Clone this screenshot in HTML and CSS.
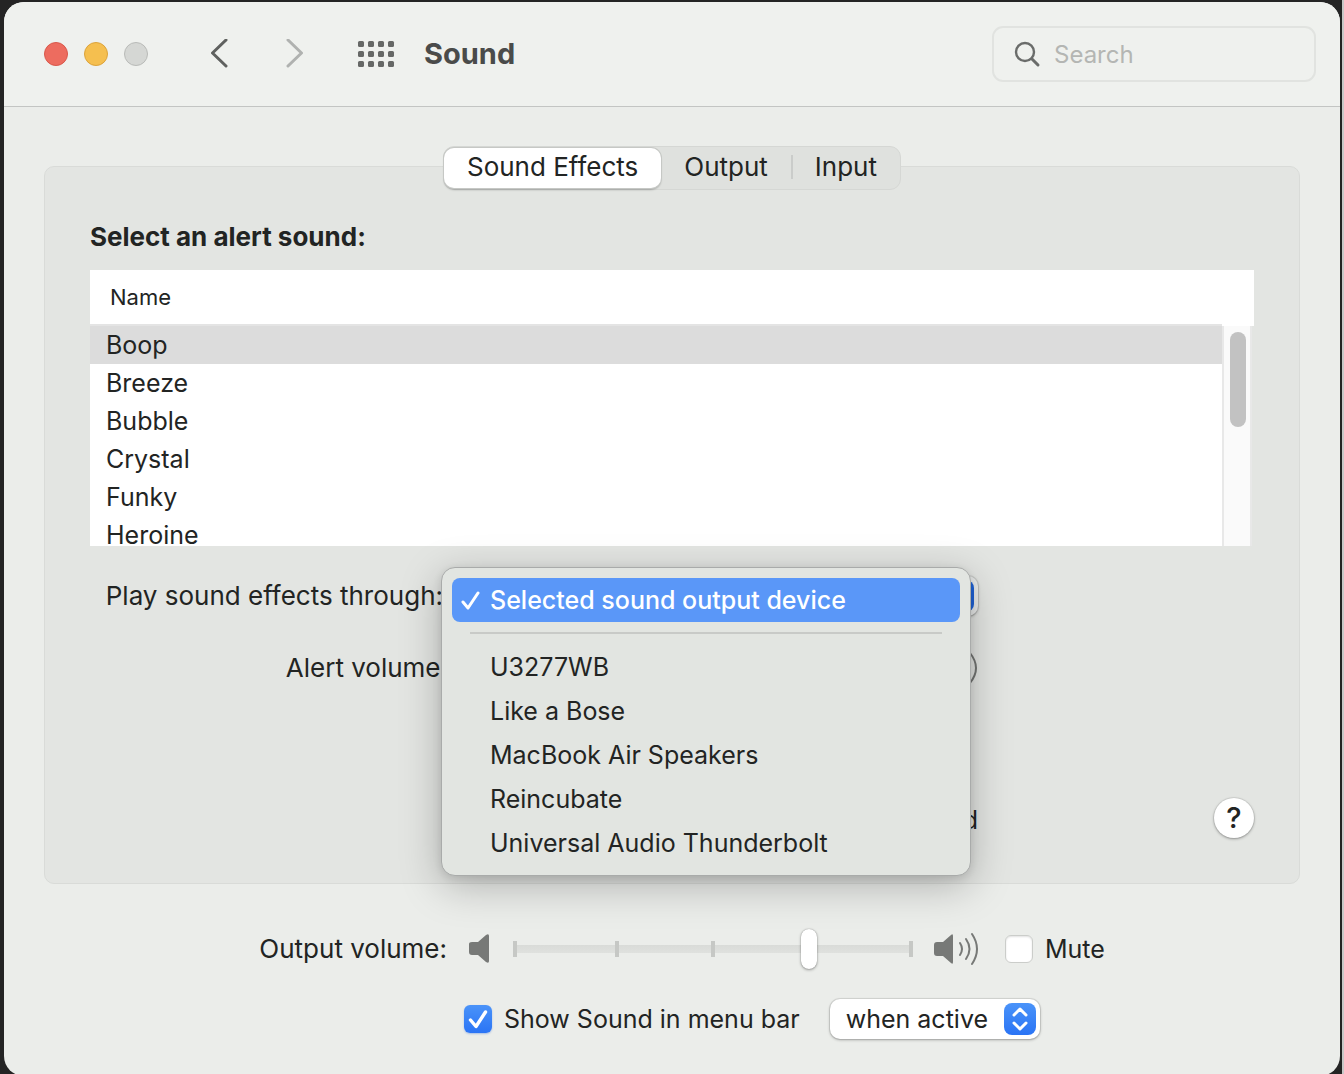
FILE: index.html
```html
<!DOCTYPE html>
<html lang="en">
<head>
    <meta charset="UTF-8">
    <meta name="viewport" content="width=device-width, initial-scale=1.0">
    <title>Sound</title>
    <link rel="stylesheet" href="styles.css">
</head>
<body>
    <div class="window">
        <header class="toolbar">
            <div class="lights">
                <button class="light close" aria-label="Close"></button>
                <button class="light minimize" aria-label="Minimize"></button>
                <button class="light zoom" aria-label="Zoom" disabled></button>
            </div>
            <div class="nav">
                <button class="icon-button" aria-label="Back">
                    <svg width="20" height="30" viewBox="0 0 20 30" fill="none" stroke="#5f615f" stroke-width="3" stroke-linecap="round" stroke-linejoin="round"><path d="M17 1 3.500 14l13.500 13"/></svg>
                </button>
                <button class="icon-button" aria-label="Forward" disabled>
                    <svg width="20" height="30" viewBox="0 0 20 30" fill="none" stroke="#b0b2b0" stroke-width="3" stroke-linecap="round" stroke-linejoin="round"><path d="M3 1l13.500 13L3 27"/></svg>
                </button>
            </div>
            <button class="icon-button" aria-label="Show All">
                <svg width="38" height="30" viewBox="0 0 38 30" fill="#666866">
                    <rect x="1" y="2" width="6" height="6" rx="1.500"/><rect x="11" y="2" width="6" height="6" rx="1.500"/><rect x="21" y="2" width="6" height="6" rx="1.500"/><rect x="31" y="2" width="6" height="6" rx="1.500"/>
                    <rect x="1" y="12" width="6" height="6" rx="1.500"/><rect x="11" y="12" width="6" height="6" rx="1.500"/><rect x="21" y="12" width="6" height="6" rx="1.500"/><rect x="31" y="12" width="6" height="6" rx="1.500"/>
                    <rect x="1" y="22" width="6" height="6" rx="1.500"/><rect x="11" y="22" width="6" height="6" rx="1.500"/><rect x="21" y="22" width="6" height="6" rx="1.500"/><rect x="31" y="22" width="6" height="6" rx="1.500"/>
                </svg>
            </button>
            <h1>Sound</h1>
            <label class="search">
                <svg width="28" height="28" viewBox="0 0 28 28" fill="none" stroke="#6a6c6a" stroke-width="2.4" stroke-linecap="round"><circle cx="11" cy="12" r="9"/><path d="M18 19l6 6" stroke-width="3"/></svg>
                <input type="text" placeholder="Search" aria-label="Search">
            </label>
        </header>

        <main>
            <div class="tabs">
                <button class="tab active">Sound Effects</button>
                <button class="tab">Output</button>
                <button class="tab last">Input</button>
            </div>

            <section class="panel">
                <h2>Select an alert sound:</h2>
                <div class="sound-list">
                    <table>
                        <thead>
                            <tr><th>Name</th></tr>
                        </thead>
                        <tbody>
                            <tr class="selected"><td>Boop</td></tr>
                            <tr><td>Breeze</td></tr>
                            <tr><td>Bubble</td></tr>
                            <tr><td>Crystal</td></tr>
                            <tr><td>Funky</td></tr>
                            <tr><td>Heroine</td></tr>
                        </tbody>
                    </table>
                    <div class="scroll">
                        <div class="scroll-head"></div>
                        <div class="scroll-track"><div class="scroll-thumb"></div></div>
                    </div>
                </div>

                <div class="form">
                    <label class="device-label" for="device">Play sound effects through:</label>
                    <div class="popup device">
                        <select id="device"><option></option></select>
                        <span class="arrows"></span>
                        <!-- open device menu -->
                        <ul class="menu">
                            <li class="current">
                                <svg width="20" height="22" viewBox="0 0 20 22" fill="none" stroke="#fff" stroke-width="3" stroke-linecap="round" stroke-linejoin="round"><path d="M3 13l5 6L18 4"/></svg>
                                Selected sound output device
                            </li>
                            <li class="separator"></li>
                            <li>U3277WB</li>
                            <li>Like a Bose</li>
                            <li>MacBook Air Speakers</li>
                            <li>Reincubate</li>
                            <li>Universal Audio Thunderbolt</li>
                        </ul>
                    </div>

                    <label class="alert-label" for="alert">Alert volume:</label>
                    <div class="alert-volume">
                        <input id="alert" class="slider" type="range" value="75">
                        <svg width="46" height="36" viewBox="0 0 46 36" fill="none" stroke="#737573" stroke-width="2" stroke-linecap="round"><path fill="#737573" stroke="none" d="M3 11h6l8-7q2-2 2 1v26q0 3-2 1l-8-7H3q-3 0-3-3v-8q0-3 3-3z"/><path d="M26 12q4 6 0 12M32 8q7 10 0 20M38 3q12 15 0 30"/></svg>
                    </div>

                    <label class="feedback"><input class="check" type="checkbox"> Play feedback when volume is changed</label>
                    <button class="help" aria-label="Help">?</button>
                </div>
            </section>

            <div class="output">
                <label for="volume">Output volume:</label>
                <div class="volume-row">
                    <svg class="quiet" width="22" height="32" viewBox="0 0 22 32" fill="#777977"><path d="M3 9h6l8-7q3-2 3 1v25q0 3-3 1l-8-7H3q-3 0-3-3v-8q0-2 3-2z"/></svg>
                    <input id="volume" class="slider" type="range" min="0" max="100" value="75">
                    <svg class="loud" width="46" height="36" viewBox="0 0 46 36" fill="none" stroke="#777977" stroke-width="2" stroke-linecap="round"><path fill="#777977" stroke="none" d="M3 11h6l8-7q2-2 2 1v26q0 3-2 1l-8-7H3q-3 0-3-3v-8q0-3 3-3z"/><path d="M26 12q4 6 0 12M32 8q7 10 0 20M38 3q10 15 0 30"/></svg>
                    <label class="check-label"><input class="check" type="checkbox"> Mute</label>
                </div>
                <div class="menubar-row">
                    <label class="check-label"><input class="check" type="checkbox" checked> Show Sound in menu bar</label>
                    <div class="popup when">
                        <select aria-label="Show in menu bar"><option>when active</option></select>
                        <span class="arrows">
                            <svg width="18" height="24" viewBox="0 0 18 24" fill="none" stroke="#fff" stroke-width="3" stroke-linecap="round" stroke-linejoin="round"><path d="M3 8l6-6 6 6M3 16l6 6 6-6"/></svg>
                        </span>
                    </div>
                </div>
            </div>
        </main>
    </div>
</body>
</html>
```
FILE: styles.css
```css
* {
    box-sizing: border-box;
}

body {
    margin: 0;
    padding: 2px 2px 0 4px;
    height: 100vh;
    overflow: hidden;
    border-right: 2px solid #c8c8c8;
    background: #242424;
    color: #222423;
    font-family: Inter, "Liberation Sans", sans-serif;
    font-size: 25px;
    line-height: 32px;
}

button, input, select {
    font: inherit;
    color: inherit;
    margin: 0;
}

button {
    padding: 0;
    border: none;
    background: none;
}

svg {
    display: block;
    flex: none;
}

.window {
    height: 100vh;
    border-radius: 20px;
    background: #ebedea;
    overflow: hidden;
}

/* toolbar */
.toolbar {
    display: flex;
    align-items: center;
    height: 105px;
    padding: 0 24px 0 40px;
    border-bottom: 1px solid #c3c5c3;
    background: #eff1ee;
}

.lights {
    display: flex;
    gap: 16px;
}

.light {
    width: 24px;
    height: 24px;
    border-radius: 50%;
    border: 1px solid #d9584b;
    background: #ed6c5f;
}

.light.minimize {
    border-color: #dca33b;
    background: #f5bf4f;
}

.light.zoom {
    border-color: #b9bbb8;
    background: #d5d7d4;
}

.nav {
    display: flex;
    gap: 56px;
    margin: 0 52px 0 61px;
}

h1 {
    margin: 0 0 0 29px;
    font-size: 29px;
    font-weight: 700;
    color: #4a4b4a;
}

.search {
    display: flex;
    align-items: center;
    gap: 12px;
    width: 324px;
    height: 56px;
    margin-left: auto;
    padding: 0 20px;
    border: 2px solid #e1e3e0;
    border-radius: 11px;
}

.search input {
    flex: 1;
    min-width: 0;
    padding: 2px 0 0;
    border: none;
    outline: none;
    background: none;
    font-size: 24px;
}

.search input::placeholder {
    color: #b4b6b3;
    opacity: 1;
}

main {
    padding: 39px 40px 0;
}

/* tabs sit on the top edge of the panel */
.tabs {
    position: relative;
    display: flex;
    width: max-content;
    height: 44px;
    margin: 0 auto -24px;
    padding: 1px 0;
    border: 1px solid #d5d7d4;
    border-radius: 11px;
    background: #dfe1de;
    font-size: 26px;
}

.tab {
    display: flex;
    align-items: center;
    padding: 0 23px 2px;
}

.tab.active {
    border-radius: 10px;
    background: #fff;
    box-shadow: 0 0 0 1px #c6c8c5, 0 2px 2px rgba(0, 0, 0, 0.25);
}

.tab.last::before {
    content: "";
    width: 2px;
    height: 24px;
    margin: 0 22px 0 -23px;
    background: #caccca;
}

.panel {
    padding: 54px 45px 45px;
    border: 1px solid #d9dbd8;
    border-radius: 10px;
    background: #e3e5e2;
}

h2 {
    margin: 0 0 17px;
    font-size: 26px;
    font-weight: 700;
}

/* alert sounds */
.sound-list {
    display: flex;
    height: 276px;
    overflow: hidden;
}

table {
    flex: 1;
    align-self: flex-start;
    border-spacing: 0;
    background: #fff;
}

th {
    height: 56px;
    padding: 0 20px;
    border-bottom: 2px solid #e4e4e4;
    font-size: 22px;
    font-weight: 400;
    text-align: left;
}

td {
    height: 38px;
    padding: 0 16px;
}

.selected {
    background: #dcdcdc;
}

.scroll {
    display: flex;
    flex-direction: column;
    width: 32px;
}

.scroll-head {
    height: 56px;
    background: #fff;
}

.scroll-track {
    flex: 1;
    width: 30px;
    padding: 6px;
    border: solid #e8e8e8;
    border-width: 0 2px;
    background: #fafafa;
}

.scroll-thumb {
    width: 16px;
    height: 95px;
    border-radius: 8px;
    background: #c2c2c2;
}

/* options under the list */
.form {
    display: grid;
    grid-template-columns: 358px 530px 1fr;
    row-gap: 32px;
    align-items: center;
    margin-top: 30px;
    text-align: right;
}

.device-label {
    padding-right: 5px;
}

.alert-label {
    grid-column: 1;
}

.popup {
    position: relative;
    height: 40px;
}

.popup select {
    width: 100%;
    height: 100%;
    padding: 0 16px;
    appearance: none;
    border: none;
    border-radius: 10px;
    background: #fff;
    box-shadow: 0 0 0 1px rgba(0, 0, 0, 0.08), 0 1px 3px rgba(0, 0, 0, 0.3);
}

.arrows {
    position: absolute;
    top: 4px;
    right: 4px;
    display: flex;
    align-items: center;
    justify-content: center;
    width: 32px;
    height: 32px;
    border-radius: 8px;
    background: linear-gradient(#4a93f9, #2a74f5);
    pointer-events: none;
}

.device select {
    background: #e9ebea;
}

.device .arrows {
    background: #1f62d6;
}

.menu {
    position: absolute;
    z-index: 2;
    top: -9px;
    left: -7px;
    width: 530px;
    margin: 0;
    padding: 10px;
    list-style: none;
    text-align: left;
    border: 1px solid #a9abaa;
    border-radius: 14px;
    background: #e2e5e1;
    box-shadow: 0 10px 40px rgba(0, 0, 0, 0.25), 0 2px 8px rgba(0, 0, 0, 0.1);
}

.menu li {
    display: flex;
    align-items: center;
    height: 44px;
    padding-left: 38px;
}

.menu .current {
    gap: 10px;
    padding-left: 8px;
    border-radius: 8px;
    background: #5a97f8;
    color: #fff;
    font-weight: 500;
}

.menu .separator {
    height: 2px;
    margin: 10px 18px 11px;
    background: #c8cac7;
}

.alert-volume {
    display: flex;
    justify-content: flex-end;
    align-items: center;
    gap: 20px;
}

.feedback {
    grid-column: 1 / 3;
    margin-top: 78px;
}

.device-label,
.alert-label,
.output > label {
    font-size: 26px;
}

.help {
    justify-self: end;
    width: 40px;
    height: 40px;
    margin-top: 78px;
    border-radius: 50%;
    background: #fff;
    box-shadow: 0 0 0 1px rgba(0, 0, 0, 0.06), 0 1px 3px rgba(0, 0, 0, 0.35);
    font-size: 29px;
    font-weight: 500;
}

/* output volume */
.output {
    display: grid;
    grid-template-columns: 403px 1fr;
    column-gap: 17px;
    row-gap: 30px;
    margin-top: 45px;
    text-align: right;
}

.output > label {
    line-height: 40px;
}

.volume-row,
.menubar-row,
.check-label {
    display: flex;
    align-items: center;
}

.menubar-row {
    grid-column: 2;
    gap: 30px;
}

.check-label {
    gap: 12px;
}

.quiet {
    margin: 0 22px 0 5px;
}

.loud {
    margin: 0 25px 0 21px;
}

.slider {
    appearance: none;
    width: 400px;
    height: 40px;
    background:
        linear-gradient(#c6c8c5, #c6c8c5) 0 50% / 4px 16px no-repeat,
        linear-gradient(#c6c8c5, #c6c8c5) 25.8% 50% / 4px 16px no-repeat,
        linear-gradient(#c6c8c5, #c6c8c5) 50% 50% / 4px 16px no-repeat,
        linear-gradient(#c6c8c5, #c6c8c5) 100% 50% / 4px 16px no-repeat,
        linear-gradient(#d9dbd8, #dfe1de) 0 50% / 100% 8px no-repeat;
}

.slider::-webkit-slider-thumb {
    appearance: none;
    width: 16px;
    height: 40px;
    border-radius: 8px;
    background: #fff;
    box-shadow: 0 0 1px rgba(0, 0, 0, 0.4), 0 1px 3px rgba(0, 0, 0, 0.35);
}

.check {
    appearance: none;
    width: 28px;
    height: 28px;
    border: 1px solid #cbcdca;
    border-radius: 6px;
    background: #fff;
    box-shadow: inset 0 1px 2px rgba(0, 0, 0, 0.12);
}

.check:checked {
    border: none;
    background: url("data:image/svg+xml,%3Csvg xmlns='http://www.w3.org/2000/svg' viewBox='0 0 28 28' fill='none' stroke='white' stroke-width='3.4' stroke-linecap='round' stroke-linejoin='round'%3E%3Cpath d='M6.500 15l5.500 6.500L21.500 7'/%3E%3C/svg%3E"), linear-gradient(#4a93f9, #2a74f5);
    box-shadow: 0 1px 2px rgba(0, 80, 220, 0.3);
}

.when {
    width: 210px;
}

/* the alert slider shrinks to its column */
.alert-volume .slider {
    flex: 1;
    min-width: 0;
    margin-left: 60px;
}
```
